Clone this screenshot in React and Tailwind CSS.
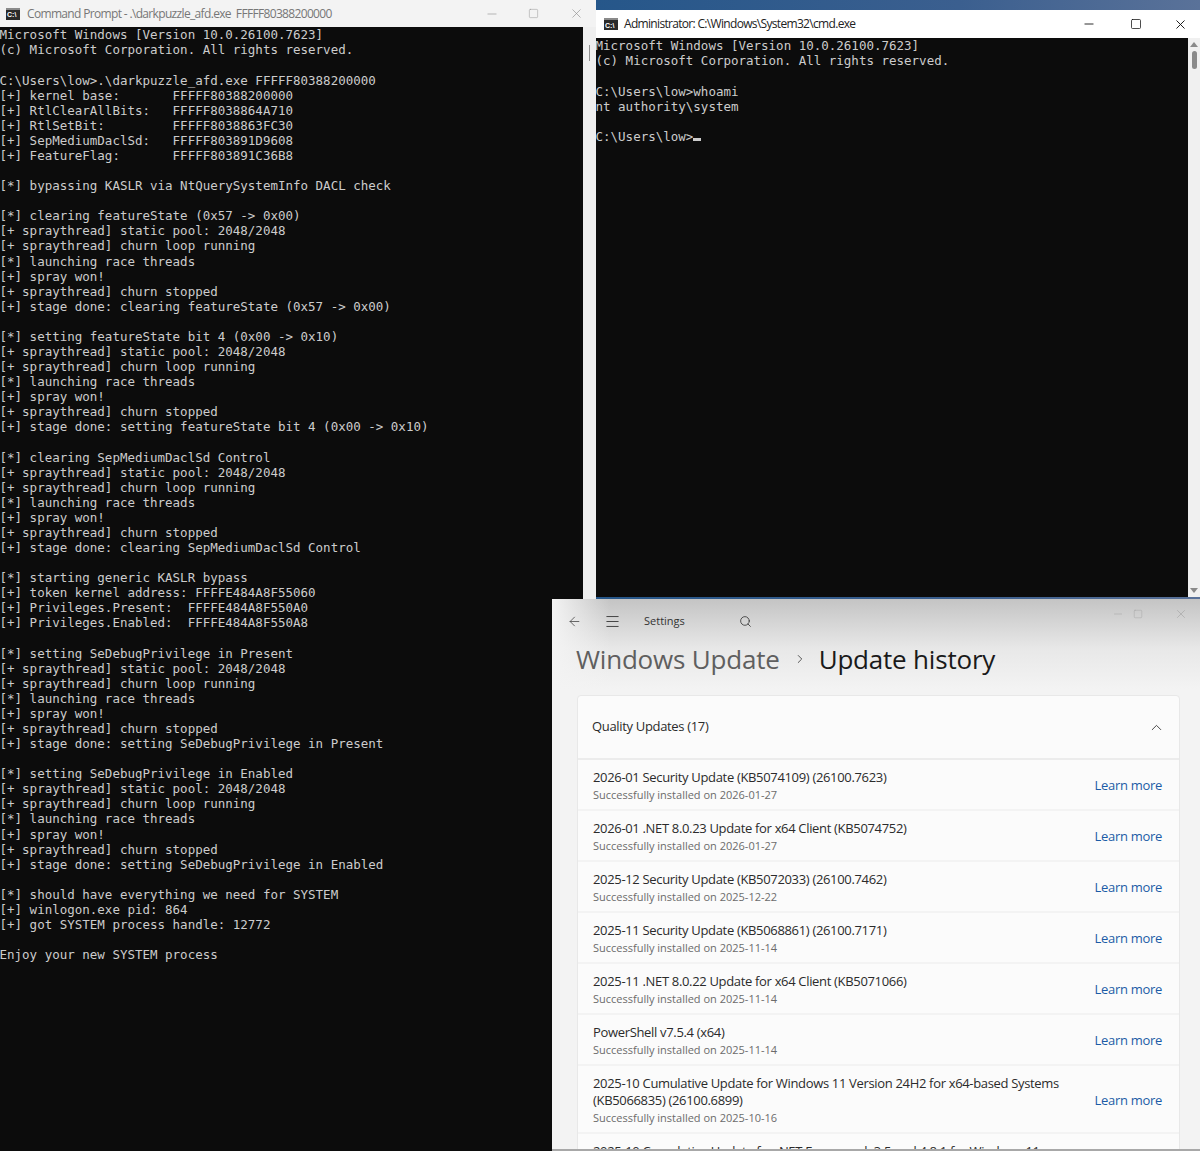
import { useState } from 'react';
import { ArrowLeft, ChevronUp, ChevronRight, Menu, Minus, Search, Square, X } from 'lucide-react';

const leftLog = `Microsoft Windows [Version 10.0.26100.7623]
(c) Microsoft Corporation. All rights reserved.

C:\\Users\\low>.\\darkpuzzle_afd.exe FFFFF80388200000
[+] kernel base:       FFFFF80388200000
[+] RtlClearAllBits:   FFFFF8038864A710
[+] RtlSetBit:         FFFFF8038863FC30
[+] SepMediumDaclSd:   FFFFF803891D9608
[+] FeatureFlag:       FFFFF803891C36B8

[*] bypassing KASLR via NtQuerySystemInfo DACL check

[*] clearing featureState (0x57 -> 0x00)
[+ spraythread] static pool: 2048/2048
[+ spraythread] churn loop running
[*] launching race threads
[+] spray won!
[+ spraythread] churn stopped
[+] stage done: clearing featureState (0x57 -> 0x00)

[*] setting featureState bit 4 (0x00 -> 0x10)
[+ spraythread] static pool: 2048/2048
[+ spraythread] churn loop running
[*] launching race threads
[+] spray won!
[+ spraythread] churn stopped
[+] stage done: setting featureState bit 4 (0x00 -> 0x10)

[*] clearing SepMediumDaclSd Control
[+ spraythread] static pool: 2048/2048
[+ spraythread] churn loop running
[*] launching race threads
[+] spray won!
[+ spraythread] churn stopped
[+] stage done: clearing SepMediumDaclSd Control

[*] starting generic KASLR bypass
[+] token kernel address: FFFFE484A8F55060
[+] Privileges.Present:  FFFFE484A8F550A0
[+] Privileges.Enabled:  FFFFE484A8F550A8

[*] setting SeDebugPrivilege in Present
[+ spraythread] static pool: 2048/2048
[+ spraythread] churn loop running
[*] launching race threads
[+] spray won!
[+ spraythread] churn stopped
[+] stage done: setting SeDebugPrivilege in Present

[*] setting SeDebugPrivilege in Enabled
[+ spraythread] static pool: 2048/2048
[+ spraythread] churn loop running
[*] launching race threads
[+] spray won!
[+ spraythread] churn stopped
[+] stage done: setting SeDebugPrivilege in Enabled

[*] should have everything we need for SYSTEM
[+] winlogon.exe pid: 864
[+] got SYSTEM process handle: 12772

Enjoy your new SYSTEM process`;

const rightLog = `Microsoft Windows [Version 10.0.26100.7623]
(c) Microsoft Corporation. All rights reserved.

C:\\Users\\low>whoami
nt authority\\system

C:\\Users\\low>`;

const updates = [
  { title: '2026-01 Security Update (KB5074109) (26100.7623)', date: '2026-01-27' },
  { title: '2026-01 .NET 8.0.23 Update for x64 Client (KB5074752)', date: '2026-01-27' },
  { title: '2025-12 Security Update (KB5072033) (26100.7462)', date: '2025-12-22' },
  { title: '2025-11 Security Update (KB5068861) (26100.7171)', date: '2025-11-14' },
  { title: '2025-11 .NET 8.0.22 Update for x64 Client (KB5071066)', date: '2025-11-14' },
  { title: 'PowerShell v7.5.4 (x64)', date: '2025-11-14' },
  { title: '2025-10 Cumulative Update for Windows 11 Version 24H2 for x64-based Systems (KB5066835) (26100.6899)', date: '2025-10-16' },
];

function CmdIcon() {
  return (
    <div className="w-[14px] h-[12px] bg-[#2a2a2a] border-t-[2px] border-[#8a8a8a] flex items-center pl-[1px] shrink-0">
      <span className="text-[7px] leading-none font-bold text-white font-['Liberation_Sans',sans-serif]">C:\</span>
    </div>
  );
}

function Console({ text, cursor, className }) {
  return (
    <pre className={`font-['DejaVu_Sans_Mono',monospace] text-[12.5px] leading-[15.08px] text-[#cccccc] whitespace-pre -ml-[0.5px] pt-[0.4px] ${className}`}>
      {text}
      {cursor && <span className="inline-block w-[8px] h-[3px] bg-[#cccccc] align-baseline" />}
    </pre>
  );
}

function UpdateRow({ title, date }) {
  return (
    <div className="flex items-center justify-between bg-[#fbfbfb] border-b-[2px] border-[#f3f3f3] pl-[15px] pr-[17px] pt-[9px] pb-[6px]">
      <div className="w-[490px]">
        <p className="text-[13px] leading-[17px] tracking-[-0.33px] text-[#2b2b2b]">{title}</p>
        <p className="text-[11px] leading-[17px] text-[#6b6b6b]">Successfully installed on {date}</p>
      </div>
      <a className="text-[13px] tracking-[-0.3px] text-[#1c5ba6]">Learn more</a>
    </div>
  );
}

export default function App() {
  const [open] = useState(true);

  return (
    <div className="relative w-[1200px] h-[1151px] overflow-hidden bg-[linear-gradient(to_right,#1d4a78,#1f5488_40%,#3b5f8f_80%,#5a7299)]">
      {/* left console window */}
      <div className="absolute left-0 top-0 w-[596px] h-[1151px] flex flex-col bg-[#f0f0f0]">
        <div className="h-[27px] shrink-0 bg-[#f3f3f3] flex items-center pl-[6px] font-['Open_Sans',sans-serif] text-[12px] text-[#777777]">
          <CmdIcon />
          <span className="ml-[7px] tracking-[-0.66px]">Command Prompt - .\darkpuzzle_afd.exe&nbsp; FFFFF80388200000</span>
          <div className="ml-auto flex items-center pr-[12px] text-[#8a8a8a]">
            <Minus size={14} strokeWidth={1} />
            <Square size={11} strokeWidth={1} className="ml-[29px]" />
            <X size={15} strokeWidth={1} className="ml-[30px]" />
          </div>
        </div>
        <div className="flex-1 flex min-h-0">
          <div className="w-[583px] bg-[#0c0c0c] overflow-hidden">
            <Console text={leftLog} />
          </div>
          <div className="flex-1 bg-[#efefef] pt-[18px] pl-[6px]">
            <div className="w-[1px] h-[16px] bg-[#8f8f8f]" />
          </div>
        </div>
      </div>

      {/* admin console window */}
      <div className="absolute left-[596px] top-[10px] w-[604px] h-[587px] flex flex-col bg-[#f3f3f3]">
        <div className="h-[28px] shrink-0 bg-white flex items-center pl-[8px] font-['Open_Sans',sans-serif] text-[12px] text-[#222222]">
          <CmdIcon />
          <span className="ml-[6px] tracking-[-0.68px]">Administrator: C:\Windows\System32\cmd.exe</span>
          <div className="ml-auto flex items-center pr-[12px] text-[#111111]">
            <Minus size={14} strokeWidth={1.5} />
            <Square size={12} strokeWidth={1.5} className="ml-[34px]" />
            <X size={15} strokeWidth={1.5} className="ml-[31px]" />
          </div>
        </div>
        <div className="flex-1 flex min-h-0">
          <div className="w-[592px] bg-[#0c0c0c] overflow-hidden">
            <Console text={rightLog} cursor />
          </div>
          <div className="flex-1 flex flex-col items-center justify-between py-[4px] bg-[#f0f0f0]">
            <div className="flex flex-col items-center gap-[4px]">
              <div className="w-0 h-0 border-x-[4px] border-x-transparent border-b-[5px] border-b-[#8a8a8a]" />
              <div className="w-[5px] h-[18px] rounded-full bg-[#8a8a8a]" />
            </div>
            <div className="w-0 h-0 border-x-[4px] border-x-transparent border-t-[5px] border-t-[#8a8a8a]" />
          </div>
        </div>
      </div>

      {/* settings window */}
      <div className="absolute left-[552px] top-[599px] w-[648px] h-[552px] overflow-hidden flex flex-col border-b-[2px] border-[#a8a8a8] font-['Open_Sans',sans-serif] bg-[linear-gradient(to_right,#f3f3f3,transparent_9%),linear-gradient(to_bottom,#c4c4c4,#e8e8e8_50px,#f3f3f3_90px)] bg-[#f3f3f3]">
        <div className="h-[45px] shrink-0 flex items-center relative">
          <ArrowLeft size={15} strokeWidth={1.25} className="ml-[15px] text-[#444444]" />
          <Menu size={17} strokeWidth={1.25} className="ml-[22px] text-[#333333]" />
          <span className="ml-[23px] text-[11px] text-[#333333]">Settings</span>
          <Search size={13} strokeWidth={1.5} className="ml-[54px] text-[#333333]" />
          <div className="absolute right-[12px] top-[8px] flex items-center text-[#a0a0a0]">
            <Minus size={12} strokeWidth={1} />
            <Square size={10} strokeWidth={1} className="ml-[9px]" />
            <X size={14} strokeWidth={1} className="ml-[31px]" />
          </div>
        </div>
        <div className="flex items-center pl-[24px] h-[30px] text-[26px] tracking-[-0.2px] font-normal">
          <span className="text-[#5f5f5f]">Windows Update</span>
          <ChevronRight size={14} strokeWidth={1.5} className="ml-[13px] mr-[12px] text-[#444444]" />
          <span className="text-[#1a1a1a]">Update history</span>
        </div>
        <div className="mt-[21px] ml-[25px] mr-[20px] border border-[#e8e8e8] rounded-t-[4px] bg-[#f3f3f3]">
          <div className="h-[64px] bg-[#fbfbfb] flex items-center justify-between pl-[14px] pr-[14px] border-b-[2px] border-[#ececec] rounded-t-[4px]">
            <span className="text-[13px] tracking-[-0.33px] text-[#2b2b2b]">Quality Updates (17)</span>
            <ChevronUp size={17} strokeWidth={1.25} className="text-[#333333]" />
          </div>
          {open && updates.map((u) => <UpdateRow key={u.title} {...u} />)}
          <div className="pl-[15px] pt-[9px] bg-[#fbfbfb] text-[13px] leading-[17px] tracking-[-0.33px] text-[#2b2b2b] whitespace-nowrap">
            2025-10 Cumulative Update for .NET Framework 3.5 and 4.8.1 for Windows 11
          </div>
        </div>
      </div>
    </div>
  );
}
